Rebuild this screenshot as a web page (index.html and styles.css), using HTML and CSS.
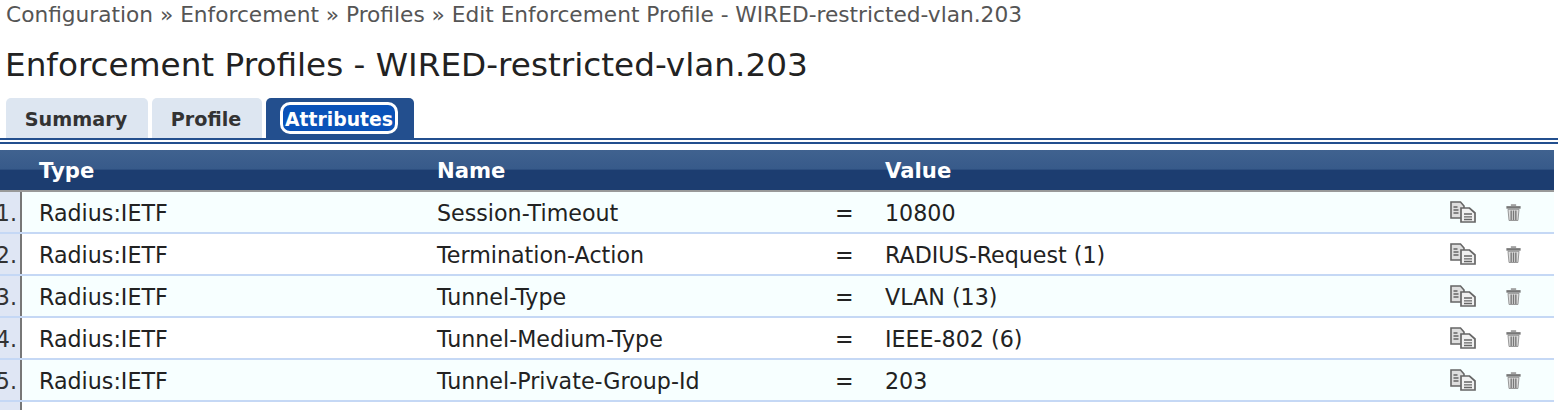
FILE: index.html
```html
<!DOCTYPE html>
<html lang="en">
<head>
<meta charset="utf-8">
<title>Edit Enforcement Profile</title>
<link rel="stylesheet" href="styles.css">
</head>
<body>
<div class="crumbs">Configuration » Enforcement » Profiles » Edit Enforcement Profile - WIRED-restricted-vlan.203</div>
<h1 class="title">Enforcement Profiles - WIRED-restricted-vlan.203</h1>
<div class="tabs">
  <div class="tab tab-summary">Summary</div>
  <div class="tab tab-profile">Profile</div>
  <div class="tab tab-active"><span class="focus">Attributes</span></div>
</div>
<div class="rule"></div>
<div class="table">
  <div class="row head">
    <div class="c-num"></div><div class="c-type">Type</div><div class="c-name">Name</div><div class="c-eq"></div><div class="c-val">Value</div>
  </div>
  <div class="row alt">
    <div class="c-num">1.</div><div class="c-type">Radius:IETF</div><div class="c-name">Session-Timeout</div><div class="c-eq">=</div><div class="c-val">10800</div>
    <div class="c-copy"><svg class="ico" viewBox="0 0 26 22"><use href="#copy"/></svg></div><div class="c-del"><svg class="ico-del" viewBox="0 0 14 16"><use href="#trash"/></svg></div>
  </div>
  <div class="row">
    <div class="c-num">2.</div><div class="c-type">Radius:IETF</div><div class="c-name">Termination-Action</div><div class="c-eq">=</div><div class="c-val">RADIUS-Request (1)</div>
    <div class="c-copy"><svg class="ico" viewBox="0 0 26 22"><use href="#copy"/></svg></div><div class="c-del"><svg class="ico-del" viewBox="0 0 14 16"><use href="#trash"/></svg></div>
  </div>
  <div class="row alt">
    <div class="c-num">3.</div><div class="c-type">Radius:IETF</div><div class="c-name">Tunnel-Type</div><div class="c-eq">=</div><div class="c-val">VLAN (13)</div>
    <div class="c-copy"><svg class="ico" viewBox="0 0 26 22"><use href="#copy"/></svg></div><div class="c-del"><svg class="ico-del" viewBox="0 0 14 16"><use href="#trash"/></svg></div>
  </div>
  <div class="row">
    <div class="c-num">4.</div><div class="c-type">Radius:IETF</div><div class="c-name">Tunnel-Medium-Type</div><div class="c-eq">=</div><div class="c-val">IEEE-802 (6)</div>
    <div class="c-copy"><svg class="ico" viewBox="0 0 26 22"><use href="#copy"/></svg></div><div class="c-del"><svg class="ico-del" viewBox="0 0 14 16"><use href="#trash"/></svg></div>
  </div>
  <div class="row alt">
    <div class="c-num">5.</div><div class="c-type">Radius:IETF</div><div class="c-name">Tunnel-Private-Group-Id</div><div class="c-eq">=</div><div class="c-val">203</div>
    <div class="c-copy"><svg class="ico" viewBox="0 0 26 22"><use href="#copy"/></svg></div><div class="c-del"><svg class="ico-del" viewBox="0 0 14 16"><use href="#trash"/></svg></div>
  </div>
  <div class="row tail"><div class="c-num"></div></div>
</div>
<svg class="defs" aria-hidden="true">
  <defs>
    <g id="copy">
      <path d="M1 1h9.5l3.5 4v12H1z" fill="#dedede" stroke="#666" stroke-width="1.6"/>
      <path d="M3.5 6h4M3.5 9h5M3.5 12h5" stroke="#666" stroke-width="1.4"/>
      <path d="M11 7h8.5l5.5 5v9H11z" fill="#f0f0f0" stroke="#666" stroke-width="1.7"/>
      <path d="M14 13h8M14 15.8h8M14 18.5h8" stroke="#666" stroke-width="1.3"/>
    </g>
    <g id="trash">
      <path d="M4.5 1h5" stroke="#999" stroke-width="1.6"/>
      <path d="M.3 3.2h13.4" stroke="#777" stroke-width="2.4"/>
      <path d="M1.8 5h10.4l-1 10.5H2.8z" fill="#ddd" stroke="#888" stroke-width=".8"/>
      <path d="M4.8 6v9M7 6v9M9.2 6v9" stroke="#777" stroke-width="1.3"/>
    </g>
  </defs>
</svg>
</body>
</html>
```
FILE: styles.css
```css
html, body { margin: 0; padding: 0; background: #fff; overflow: hidden; }
body { width: 1558px; height: 410px; font-family: "DejaVu Sans", Verdana, sans-serif; color: #222; }
.crumbs { height: 28px; padding-left: 6px; font-size: 21.7px; line-height: 30px; color: #555; white-space: nowrap; }
.title { margin: 0; height: 70px; padding-left: 5px; font-size: 32.7px; font-weight: 400; line-height: 74px; color: #222; white-space: nowrap; }
.tabs { display: flex; height: 40px; padding-left: 6px; gap: 4px; }
.tab { box-sizing: border-box; display: flex; align-items: center; justify-content: center; border-radius: 5px 5px 0 0; background: #dde6f1; font-size: 19.2px; font-weight: 700; color: #333; padding-top: 2px; }
.tab-summary { width: 142px; padding-right: 2px; }
.tab-profile { width: 110px; padding-right: 2px; }
.tab-active { width: 148px; background: #234f8e; color: #fff; padding: 0 2px 0 0; font-size: 18.8px; }
.focus { box-sizing: border-box; width: 118px; height: 32px; padding-top: 2px; display: flex; align-items: center; justify-content: center; border: 3px solid #fff; border-radius: 10px; background: #0a52b8; }
.rule { height: 0; padding-top: 2px; margin-bottom: 6px; border-top: 2px solid #234f8e; border-bottom: 2px solid #234f8e; }
.table { width: 1554px; font-size: 22.2px; }
.row { box-sizing: content-box; display: flex; height: 40px; align-items: center; border-bottom: 2px solid #c5d8f5; background: #fff; color: #222; white-space: nowrap; }
.alt { background: #f7ffff; }
.head { height: 40px; border-bottom: 2px solid #999; background: linear-gradient(#40628f 0, #375a8a 48%, #1c3d70 50%, #1c3d70 100%); color: #fff; font-weight: 700; font-size: 21.2px; }
.c-num { box-sizing: border-box; flex: none; align-self: stretch; width: 22px; display: flex; align-items: center; justify-content: flex-end; padding: 1px 3px 0 0; background: #dfe6f4; border-right: 2px solid #777; color: #333; }
.head .c-num { background: none; border-right: 0; }
.c-type { flex: none; width: 381px; padding: 1px 0 0 17px; }
.c-name { flex: none; width: 381px; padding: 1px 0 0 17px; }
.c-eq { flex: none; width: 33px; padding: 1px 0 0 17px; }
.c-val { flex: 1; padding: 1px 0 0 17px; }
.c-copy { flex: none; width: 56px; display: flex; }
.c-del { flex: none; width: 48px; display: flex; }
.ico { width: 26px; height: 22px; }
.ico-del { width: 15px; height: 17px; }
.tail { height: 8px; border-bottom: 0; align-items: stretch; }
.defs { display: none; }
```
